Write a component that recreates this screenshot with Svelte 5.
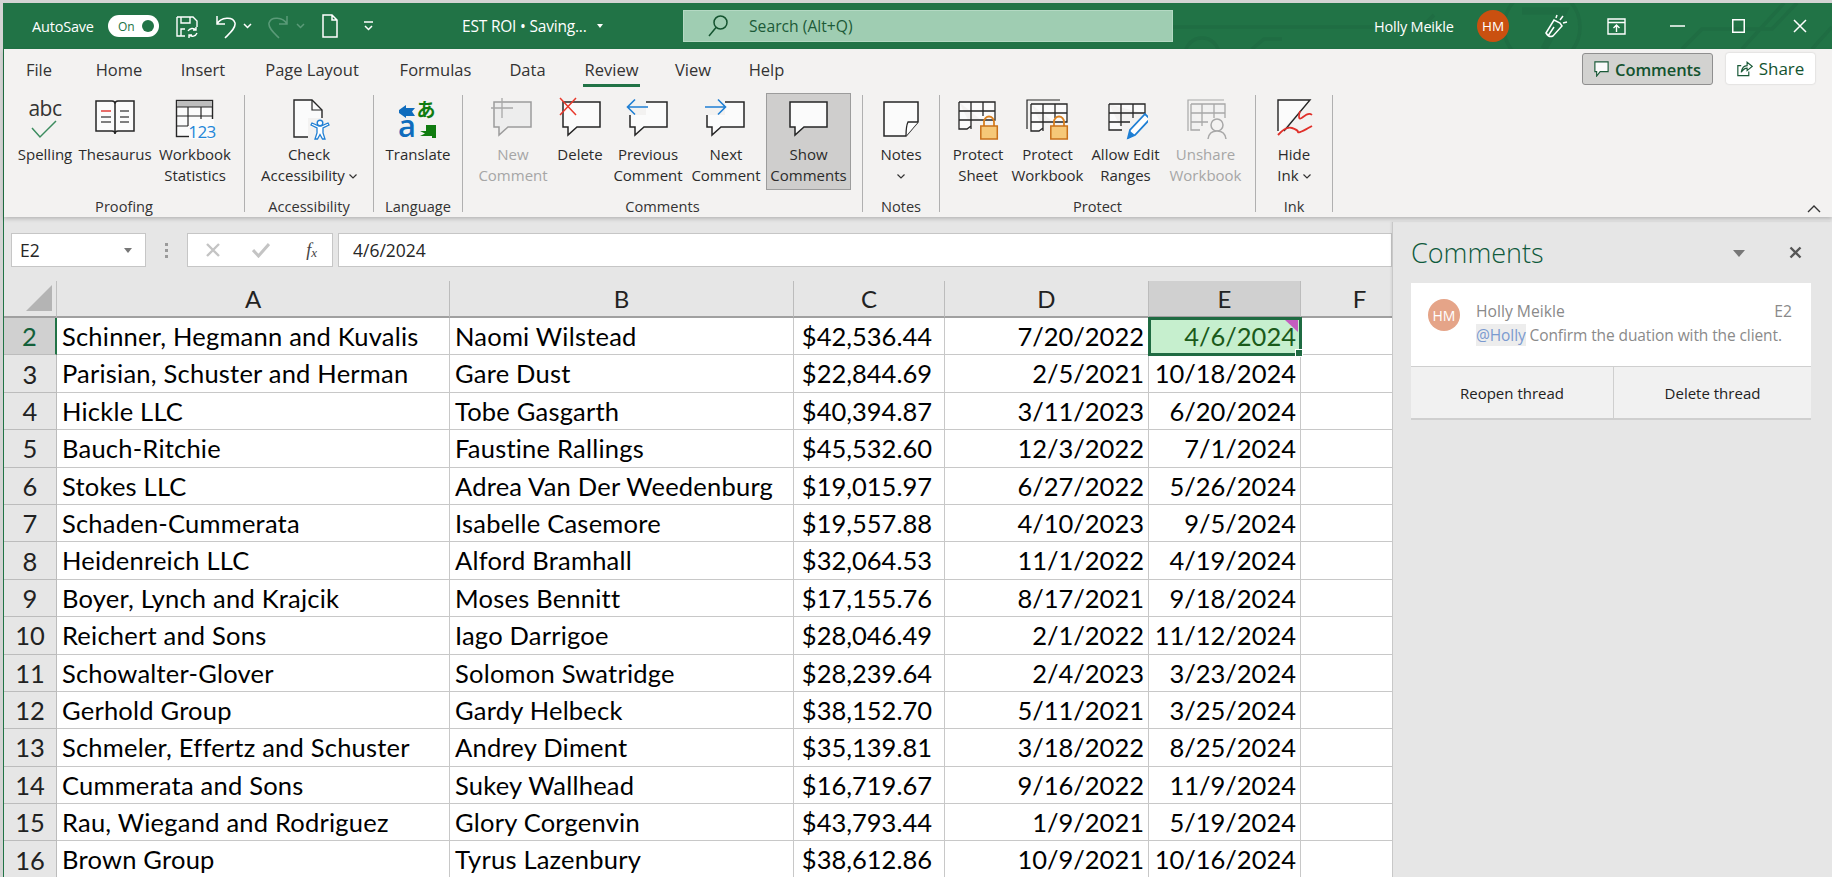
<script>
  const tabs = [
    ['File', 70], ['Home', 90], ['Insert', 78], ['Page Layout', 140], ['Formulas', 107],
    ['Data', 77], ['Review', 91], ['View', 72], ['Help', 75]
  ];
  const groups = [
    { label: 'Proofing', w: 241, pad: 6, items: [
      { id: 'spell', l: ['Spelling'], w: 70 }, { id: 'thes', l: ['Thesaurus'], w: 70 }, { id: 'stats', l: ['Workbook', 'Statistics'], w: 90 }
    ]},
    { label: 'Accessibility', w: 129, pad: 0, center: true, items: [{ id: 'access', l: ['Check', 'Accessibility'], w: 110, chev: 1 }] },
    { label: 'Language', w: 89, pad: 0, center: true, items: [{ id: 'trans', l: ['Translate'], w: 80 }] },
    { label: 'Comments', w: 400, pad: 18, items: [
      { id: 'new', l: ['New', 'Comment'], w: 64, off: true },
      { id: 'del', l: ['Delete'], w: 58, ml: 6 },
      { id: 'prev', l: ['Previous', 'Comment'], w: 74, ml: 2 },
      { id: 'next', l: ['Next', 'Comment'], w: 74, ml: 4 },
      { id: 'show', l: ['Show', 'Comments'], w: 85, ml: 3, on: true }
    ]},
    { label: 'Notes', w: 77, pad: 0, center: true, items: [{ id: 'notes', l: ['Notes'], w: 70, chevLine: 1 }] },
    { label: 'Protect', w: 316, pad: 5, items: [
      { id: 'psheet', l: ['Protect', 'Sheet'], w: 66 },
      { id: 'pbook', l: ['Protect', 'Workbook'], w: 73 },
      { id: 'allow', l: ['Allow Edit', 'Ranges'], w: 83 },
      { id: 'unshare', l: ['Unshare', 'Workbook'], w: 77, off: true }
    ]},
    { label: 'Ink', w: 77, pad: 0, center: true, items: [{ id: 'ink', l: ['Hide', 'Ink'], w: 60, chev: 1 }] }
  ];
  const rows = [
    ['Schinner, Hegmann and Kuvalis', 'Naomi Wilstead', '$42,536.44', '7/20/2022', '4/6/2024'],
    ['Parisian, Schuster and Herman', 'Gare Dust', '$22,844.69', '2/5/2021', '10/18/2024'],
    ['Hickle LLC', 'Tobe Gasgarth', '$40,394.87', '3/11/2023', '6/20/2024'],
    ['Bauch-Ritchie', 'Faustine Rallings', '$45,532.60', '12/3/2022', '7/1/2024'],
    ['Stokes LLC', 'Adrea Van Der Weedenburg', '$19,015.97', '6/27/2022', '5/26/2024'],
    ['Schaden-Cummerata', 'Isabelle Casemore', '$19,557.88', '4/10/2023', '9/5/2024'],
    ['Heidenreich LLC', 'Alford Bramhall', '$32,064.53', '11/1/2022', '4/19/2024'],
    ['Boyer, Lynch and Krajcik', 'Moses Bennitt', '$17,155.76', '8/17/2021', '9/18/2024'],
    ['Reichert and Sons', 'Iago Darrigoe', '$28,046.49', '2/1/2022', '11/12/2024'],
    ['Schowalter-Glover', 'Solomon Swatridge', '$28,239.64', '2/4/2023', '3/23/2024'],
    ['Gerhold Group', 'Gardy Helbeck', '$38,152.70', '5/11/2021', '3/25/2024'],
    ['Schmeler, Effertz and Schuster', 'Andrey Diment', '$35,139.81', '3/18/2022', '8/25/2024'],
    ['Cummerata and Sons', 'Sukey Wallhead', '$16,719.67', '9/16/2022', '11/9/2024'],
    ['Rau, Wiegand and Rodriguez', 'Glory Corgenvin', '$43,793.44', '1/9/2021', '5/19/2024'],
    ['Brown Group', 'Tyrus Lazenbury', '$38,612.86', '10/9/2021', '10/16/2024']
  ];
  const cols = ['A', 'B', 'C', 'D', 'E', 'F'];
</script>

{#snippet bubble(x, y, stroke = '#262626', fill = '#fbfbfb')}
  <path d="M{x} {y}H{x + 37}V{y + 25}H{x + 14}L{x + 5} {y + 33}V{y + 25}H{x}Z" fill={fill} stroke={stroke} stroke-width="1.5" />
{/snippet}

{#snippet sheetGrid(x, y, stroke = '#262626', fill = '#fbfbfb')}
  <path d="M{x} {y}H{x + 36}V{y + 18}H{x + 22}M{x + 12} {y}V{y + 27}M{x + 24} {y}V{y + 14}M{x} {y + 9}H{x + 36}M{x} {y + 18}H{x + 22}M{x} {y}V{y + 27}H{x + 8}l4-3" fill={fill} stroke={stroke} stroke-width="1.3" />
{/snippet}

{#snippet lock(x, y)}
  <path d="M{x + 4} {y + 10}V{y + 6}a5 5.5 0 0 1 10 0V{y + 10}" fill="none" stroke="#d9801f" stroke-width="1.8" />
  <rect x={x + 0.8} y={y + 10} width="16.5" height="13" fill="#f6c878" stroke="#c8701a" stroke-width="1.5" />
{/snippet}

{#snippet icon(id)}
  <svg class="ic" width="44" height="64" viewBox="0 -10 44 64" aria-hidden="true">
    {#if id === 'spell'}
      <text x="22" y="18" text-anchor="middle" class="abc">abc</text>
      <path d="M9 30L17 39 33 23" fill="none" stroke="#3c8c5f" stroke-width="1.5" />
    {:else if id === 'thes'}
      <path d="M3 3H19Q22 3 22 6V36Q22 33 19 33H3Z M41 3H25Q22 3 22 6V36Q22 33 25 33H41Z" fill="#fbfbfb" stroke="#262626" stroke-width="1.5" />
      <path d="M8 13H18" stroke="#e0302a" stroke-width="1.4" />
      <path d="M8 19H18M8 24H18M27 13H36M27 19H36M27 24H36" stroke="#555" stroke-width="1.3" />
    {:else if id === 'stats'}
      <rect x="3.5" y="2.5" width="36" height="36" fill="#fbfbfb" stroke="#262626" stroke-width="1.4" />
      <rect x="4" y="3" width="35" height="6" fill="#bdbdbd" />
      <path d="M4 9H39M4 18H39M15 9V28M28 9V28M4 28H15" stroke="#262626" stroke-width="1.2" fill="none" />
      <rect x="16" y="21" width="25" height="20" fill="#fbfbfb" />
      <text x="29" y="39.5" text-anchor="middle" class="n123">123</text>
    {:else if id === 'access'}
      <path d="M7 2H25L35 12V39H7Z" fill="#fbfbfb" stroke="#262626" stroke-width="1.4" />
      <path d="M25 2V12H35" fill="none" stroke="#262626" stroke-width="1.2" />
      <rect x="21" y="20" width="22" height="22" fill="#f3f2f1" />
      <circle cx="33" cy="25" r="2.8" fill="#fff" stroke="#1f7fd4" stroke-width="1.4" />
      <path d="M24 27l6 3V35L28 41H30.5L33 36.5 35.5 41H38L36 35V30l6-3-1-2-7 3H32l-7-3Z" fill="#fff" stroke="#1f7fd4" stroke-width="1.3" />
    {:else if id === 'trans'}
      <path d="M3 12L10 7V10H19L16 13.5 19 18H10V20L3 15Z" fill="#0f6cbd" />
      <text x="11" y="39" text-anchor="middle" class="tr-a">a</text>
      <text x="30" y="19" text-anchor="middle" class="tr-j">あ</text>
      <path d="M24 33L30 33V27H40V40H36V38H24L29 35.5Z" fill="#107c10" />
    {:else if id === 'new'}
      <g transform="translate(3,4)">{@render bubble(0, 0, '#9c9c9c', '#ededed')}</g>
      <path d="M0 10H22M11 0V20" stroke="#a8a8a8" stroke-width="1.3" />
    {:else if id === 'del'}
      <g transform="translate(5,4)">{@render bubble(0, 0)}</g>
      <path d="M2 0L18 17M18 0L2 17" stroke="#e8392c" stroke-width="1.5" />
    {:else if id === 'prev'}
      <g transform="translate(4,4)">{@render bubble(0, 0)}</g>
      <rect x="0" y="0" width="20" height="17" fill="#f3f2f1" />
      <path d="M22 9H2M9 1.5L1.5 9 9 16.5" fill="none" stroke="#1f7fd4" stroke-width="1.6" />
    {:else if id === 'next'}
      <g transform="translate(3,4)">{@render bubble(0, 0)}</g>
      <rect x="1" y="0" width="20" height="17" fill="#f3f2f1" />
      <path d="M1 9H21M14 1.5L21.5 9 14 16.5" fill="none" stroke="#1f7fd4" stroke-width="1.6" />
    {:else if id === 'show'}
      <g transform="translate(3,4)">{@render bubble(0, 0)}</g>
    {:else if id === 'notes'}
      <path d="M5 4H39V24L27 38H5Z" fill="#fbfbfb" stroke="#262626" stroke-width="1.5" />
      <path d="M39 24H29Q27 28 27 38" fill="#fff" stroke="#262626" stroke-width="1.3" />
    {:else if id === 'psheet'}
      {@render sheetGrid(3, 4)}
      {@render lock(24, 18)}
    {:else if id === 'pbook'}
      <path d="M1 31V2H34" fill="none" stroke="#262626" stroke-width="1.2" />
      {@render sheetGrid(5, 6)}
      {@render lock(24, 18)}
    {:else if id === 'allow'}
      <path d="M5 6H41V16M17 6V28M29 6V20M5 15H41M5 24H26M5 6V32H18" fill="#fbfbfb" stroke="#262626" stroke-width="1.3" />
      <path d="M24 40L26 32 41 16 46 21 31 37Z" fill="#fff" stroke="#1f7fd4" stroke-width="1.8" />
      <path d="M24 41L26 33 31 37Z" fill="#1f7fd4" />
    {:else if id === 'unshare'}
      <path d="M4 33V2H40" fill="none" stroke="#a8a8a8" stroke-width="1.2" />
      <path d="M7 6H41V20M18 6V28M30 6V20M7 15H41M7 24H24M7 6V32H16" fill="#f1f1f1" stroke="#a8a8a8" stroke-width="1.3" />
      <circle cx="33" cy="27" r="6" fill="#f3f2f1" stroke="#a8a8a8" stroke-width="1.5" />
      <path d="M24 41Q25 33 33 33T42 41" fill="#f3f2f1" stroke="#a8a8a8" stroke-width="1.5" />
    {:else if id === 'ink'}
      <path d="M6 2H38L6 36Z" fill="#fbfbfb" />
      <path d="M6 33V2H38L12 33" fill="none" stroke="#262626" stroke-width="1.4" />
      <path d="M28 13Q25 24 31 19T40 17" fill="none" stroke="#e0302a" stroke-width="1.7" />
      <path d="M6 37Q14 28 20 30T26 34T40 28" fill="none" stroke="#e0302a" stroke-width="1.9" />
    {/if}
  </svg>
{/snippet}

<div class="screen">
  <div class="win">
    <header class="title">
      <svg class="circuit" width="660" height="46" viewBox="0 0 660 46" aria-hidden="true">
        <g fill="none" stroke="#1f6d43" stroke-width="3.5">
          <path d="M0 24H250L262 12" />
          <circle cx="30" cy="52" r="17" />
          <path d="M80 46L92 36H110" />
          <circle cx="370" cy="24" r="38" />
          <path d="M350 8H392L372 46" stroke-width="7" />
          <path d="M510 46L530 26H600L625 0M570 46L612 0M640 46L660 24" />
        </g>
      </svg>
      <span class="autosave">AutoSave</span>
      <span class="toggle"><b>On</b><i></i></span>
      <svg class="q-save" width="22" height="26" viewBox="0 0 22 26" fill="none" stroke="#fff" stroke-width="1.4"><path d="M1 4H17L21 8V14M1 4V23H9M5 4V10H14V4M5 23V16H9" /><path d="M12 18a5 5 0 0 1 8-1M21 20a5 5 0 0 1-8 2M20 14V17H17M13 25V22H16" /></svg>
      <svg class="q-undo" width="20" height="26" viewBox="0 0 20 26" fill="none" stroke="#fff" stroke-width="1.5"><path d="M1 3V11H9M1 11C5 4 17 3 19 10 20 15 14 20 9 25" /></svg>
      <svg class="q-ch1" width="9" height="6" viewBox="0 0 9 6" fill="none" stroke="#fff" stroke-width="1.5"><path d="M1 1L4.5 4.5 8 1" /></svg>
      <svg class="q-redo" width="20" height="26" viewBox="0 0 20 26" fill="none" stroke="#5a9a78" stroke-width="1.5"><path d="M19 3V11H11M19 11C15 4 3 3 1 10 0 15 6 20 11 25" /></svg>
      <svg class="q-ch2" width="9" height="6" viewBox="0 0 9 6" fill="none" stroke="#5a9a78" stroke-width="1.5"><path d="M1 1L4.5 4.5 8 1" /></svg>
      <svg class="q-doc" width="16" height="24" viewBox="0 0 16 24" fill="none" stroke="#fff" stroke-width="1.5"><path d="M1 1H10L15 6V23H1ZM10 1V6H15" /></svg>
      <svg class="q-more" width="9" height="10" viewBox="0 0 9 10" fill="none" stroke="#fff" stroke-width="1.5"><path d="M0 1H9M1 5L4.5 8.5 8 5" /></svg>
      <span class="doc">EST ROI • Saving...</span>
      <span class="doc-arrow"></span>
      <div class="search">
        <svg width="20" height="22" viewBox="0 0 20 22" fill="none" stroke="#14532f" stroke-width="1.5"><circle cx="12.5" cy="7.5" r="6.5" /><path d="M8 12.5L1 21" /></svg>
        <span>Search (Alt+Q)</span>
      </div>
      <span class="user">Holly Meikle</span>
      <span class="avatar">HM</span>
      <svg class="t-ink" width="23" height="24" viewBox="0 0 23 24" fill="none" stroke="#fff" stroke-width="1.5"><path d="M1 19L9 6 15 9 17 12 8 22Q4 24 1 19ZM3 22L9 13M12 1L11 4M18 2L15 6M22 8L18 9" /></svg>
      <svg class="t-disp" width="19" height="17" viewBox="0 0 19 17" fill="none" stroke="#fff" stroke-width="1.4"><path d="M1 1H18V16H1ZM1 4.5H18M9.5 14V7.5M6.5 10L9.5 7 12.5 10" /></svg>
      <svg class="t-min" width="15" height="2" viewBox="0 0 15 2"><path d="M0 1H15" stroke="#fff" stroke-width="1.5" /></svg>
      <svg class="t-max" width="13" height="14" viewBox="0 0 13 14"><rect x=".75" y=".75" width="11.5" height="12.5" fill="none" stroke="#fff" stroke-width="1.5" /></svg>
      <svg class="t-close" width="14" height="14" viewBox="0 0 14 14"><path d="M1 1L13 13M13 1L1 13" fill="none" stroke="#fff" stroke-width="1.5" /></svg>
    </header>

    <section class="ribbon">
      <div class="tabs">
        {#each tabs as [t, w]}
          <div class="tab" class:active={t === 'Review'} style="width:{w}px">{t}</div>
        {/each}
        <div class="tab-actions">
          <div class="btn-comments">
            <svg width="15" height="16" viewBox="0 0 17 18" fill="#fafafa" stroke="#1a5a38" stroke-width="1.3"><path d="M1 1H16V12H7L3 17V12H1Z" /></svg>
            Comments
          </div>
          <div class="btn-share">
            <svg width="16" height="17" viewBox="0 0 19 19" fill="none" stroke="#1a5a38" stroke-width="1.4"><path d="M5 6H1V18H14V13M5 14C6 8 9 6 12 6V2L18 7 12 12V9C9 9 7 11 5 14Z" /></svg>
            Share
          </div>
        </div>
      </div>
      <div class="groups">
        {#each groups as g}
          <div class="group" style="width:{g.w}px">
            <div class="items" class:center={g.center} style="padding-left:{g.pad}px">
              {#each g.items as it}
                <div class="rbtn" class:off={it.off} class:on={it.on} style="width:{it.w}px;margin-left:{it.ml || 0}px">
                  {@render icon(it.id)}
                  <div class="lbl">
                    {#each it.l as line, i}
                      <span>{line}{#if it.chev && i === it.l.length - 1}<svg class="mini" width="8" height="5" viewBox="0 0 8 5"><path d="M.5.5L4 4 7.5.5" fill="none" stroke="#333" stroke-width="1.2" /></svg>{/if}</span>
                    {/each}
                    {#if it.chevLine}<span><svg class="mini solo" width="8" height="5" viewBox="0 0 8 5"><path d="M.5.5L4 4 7.5.5" fill="none" stroke="#333" stroke-width="1.2" /></svg></span>{/if}
                  </div>
                </div>
              {/each}
            </div>
            <div class="glabel">{g.label}</div>
          </div>
        {/each}
      </div>
      <svg class="collapse" width="14" height="8" viewBox="0 0 14 8"><path d="M1 7L7 1 13 7" fill="none" stroke="#333" stroke-width="1.4" /></svg>
    </section>

    <div class="work">
      <div class="sheet">
        <div class="fbar">
          <div class="namebox"><span>E2</span><i></i></div>
          <div class="dots"><b></b><b></b><b></b></div>
          <div class="fbtns">
            <svg width="16" height="16" viewBox="0 0 16 16"><path d="M2 2L14 14M14 2L2 14" stroke="#c4c4c4" stroke-width="2.4" /></svg>
            <svg class="fcheck" width="18" height="16" viewBox="0 0 18 16"><path d="M1 8L6.5 14 17 2" fill="none" stroke="#c4c4c4" stroke-width="3" /></svg>
            <span class="fx">f<sub>x</sub></span>
          </div>
          <div class="finput">4/6/2024</div>
        </div>
        <div class="gridwrap">
          <div class="grid">
            <div class="corner"><span></span></div>
            {#each cols as c}
              <div class="ch" class:sel={c === 'E'}>{c}</div>
            {/each}
            {#each rows as r, i}
              <div class="rh" class:sel={i === 0}>{i + 2}</div>
              <div class="cell txt">{r[0]}</div>
              <div class="cell txt">{r[1]}</div>
              <div class="cell money">{r[2]}</div>
              <div class="cell date">{r[3]}</div>
              <div class="cell date" class:active={i === 0}>{r[4]}</div>
              <div class="cell"></div>
            {/each}
          </div>
        </div>
      </div>

      <aside class="panel">
        <div class="phead">
          <span>Comments</span>
          <i class="pdrop"></i>
          <svg width="13" height="13" viewBox="0 0 13 13"><path d="M1.5 1.5L11.5 11.5M11.5 1.5L1.5 11.5" stroke="#555" stroke-width="2.4" /></svg>
        </div>
        <div class="card">
          <div class="cbody">
            <div class="cav">HM</div>
            <div class="ctext">
              <div class="cname"><span>Holly Meikle</span><span>E2</span></div>
              <div class="cmsg"><mark>@Holly</mark> Confirm the duation with the client.</div>
            </div>
          </div>
          <div class="cacts">
            <div>Reopen thread</div>
            <div>Delete thread</div>
          </div>
        </div>
      </aside>
    </div>
  </div>
</div>

<style>
  :global(body) { margin: 0; background: #d8d8d8; overflow: hidden; }
  .screen { width: 1832px; height: 877px; overflow: hidden; padding: 3px 0 0 3px; box-sizing: border-box; background: #d4d4d4; font-family: "Open Sans", "Noto Sans", sans-serif; color: #262626; }
  .win { width: 1829px; height: 874px; border-left: 1px solid #217346; box-sizing: border-box; background: #e6e6e6; display: flex; flex-direction: column; }

  .title { position: relative; height: 46px; flex: none; background: #217346; display: flex; align-items: center; color: #fff; font-size: 14.5px; overflow: hidden; }
  .title > * { flex: none; position: relative; }
  .title > .circuit { position: absolute; left: 1168px; top: 0; }
  .autosave { margin-left: 28px; width: 68px; white-space: nowrap; letter-spacing: -.2px; }
  .toggle { margin-left: 8px; width: 51px; height: 22px; border-radius: 11px; background: #fff; color: #217346; display: flex; align-items: center; justify-content: space-between; padding: 0 5px 0 10px; box-sizing: border-box; font-size: 12px; }
  .toggle b { font-weight: 400; }
  .toggle i { width: 12px; height: 12px; border-radius: 50%; background: #217346; }
  .q-save { margin-left: 17px; }
  .q-undo { margin-left: 18px; }
  .q-ch1 { margin-left: 7px; }
  .q-redo { margin-left: 16px; }
  .q-ch2 { margin-left: 8px; }
  .q-doc { margin-left: 17px; }
  .q-more { margin-left: 26px; }
  .doc { margin-left: 89px; width: 125px; white-space: nowrap; font-size: 15.5px; letter-spacing: -.2px; }
  .doc-arrow { margin-left: 10px; border: 3.5px solid transparent; border-top: 4px solid #fff; border-bottom: 0; width: 0; height: 0; }
  .search { margin-left: 80px; width: 490px; height: 32px; background: #9fcdb2; border: 1px solid #b4d9c3; box-sizing: border-box; display: flex; align-items: center; padding-left: 24px; color: #1c5a38; gap: 21px; font-size: 15.7px; }
  .user { margin-left: 201px; width: 89px; white-space: nowrap; letter-spacing: -.2px; }
  .avatar { margin-left: 14px; width: 32px; height: 32px; border-radius: 50%; background: #ca5010; display: flex; align-items: center; justify-content: center; font-size: 13.5px; }
  .t-ink { margin-left: 36px; }
  .t-disp { margin-left: 39px; }
  .t-min { margin-left: 44px; }
  .t-max { margin-left: 47px; }
  .t-close { margin-left: 48px; }

  .ribbon { position: relative; z-index: 2; height: 168px; flex: none; background: #f3f2f1; box-shadow: 0 2px 4px rgba(0, 0, 0, .2); }
  .tabs { display: flex; height: 44px; font-size: 16.5px; }
  .tab { position: relative; line-height: 42px; text-align: center; flex: none; color: #333; }
  .tab.active::after { content: ""; position: absolute; left: 17px; right: 17px; bottom: 6px; height: 3px; background: #217346; }
  .tab-actions { margin-left: auto; padding: 4px 17px 0 0; display: flex; gap: 13px; align-items: flex-start; }
  .btn-comments, .btn-share { display: flex; align-items: center; justify-content: center; gap: 6px; height: 31px; border-radius: 3px; color: #14532f; box-sizing: border-box; }
  .btn-comments { width: 131px; height: 32px; background: #d2d2d0; border: 1px solid #8f8f8f; font-weight: 600; font-size: 16.5px; letter-spacing: -.1px; }
  .btn-share { width: 89px; background: #fff; box-shadow: 0 0 2px rgba(0, 0, 0, .2); font-size: 17px; }

  .groups { display: flex; height: 119px; }
  .group { flex: none; box-sizing: border-box; border-right: 1px solid #b0b0b0; margin-top: 2px; height: 117px; display: flex; flex-direction: column; position: relative; }
  .items { flex: 1; display: flex; margin-top: -2px; }
  .items.center { justify-content: center; padding-left: 0 !important; }
  .group .glabel { text-align: center; font-size: 14.6px; line-height: 20px; height: 16px; color: #333; }
  .rbtn { flex: none; height: 97px; display: flex; flex-direction: column; align-items: center; box-sizing: border-box; font-size: 15px; line-height: 21px; color: #2b2b2b; padding-top: 5px; }
  .rbtn .ic { flex: none; margin: -10px 0; }
  .rbtn.off { color: #a6a6a6; }
  .rbtn.on { background: #cfcecd; border: 1px solid #9c9c9c; padding-top: 4px; }
  .lbl { display: flex; flex-direction: column; align-items: center; white-space: nowrap; margin-top: 2px; }
  .mini { margin-left: 4px; vertical-align: 2px; }
  .mini.solo { margin-left: 0; }
  .collapse { position: absolute; left: 1803px; top: 156px; }
  .abc { font: 400 21px "Open Sans", sans-serif; fill: #333; letter-spacing: -.5px; }
  .n123 { font: 400 17px "Open Sans", sans-serif; fill: #2386d8; letter-spacing: -.5px; }
  .tr-a { font: 600 31px "Open Sans", sans-serif; fill: #0f6cbd; }
  .tr-j { font: 700 19px "Noto Sans CJK JP", sans-serif; fill: #107c10; }

  .work { flex: 1; display: flex; min-height: 0; }
  .sheet { width: 1388px; flex: none; overflow: hidden; padding-top: 16px; box-sizing: border-box; display: flex; flex-direction: column; }
  .fbar { display: flex; height: 34px; margin-left: 7px; flex: none; font-size: 17.5px; }
  .namebox, .fbtns, .finput { background: #fff; border: 1px solid #c6c6c6; box-sizing: border-box; }
  .namebox { width: 135px; display: flex; align-items: center; justify-content: space-between; padding: 0 13px 0 8px; }
  .namebox i { border: 4.5px solid transparent; border-top: 5px solid #777; border-bottom: 0; }
  .dots { width: 41px; display: flex; flex-direction: column; align-items: center; justify-content: center; gap: 3px; }
  .dots b { width: 3px; height: 3px; background: #9a9a9a; }
  .fbtns { width: 146px; display: flex; align-items: center; justify-content: space-between; padding: 0 15px 0 17px; }
  .fcheck { margin-left: -6px; }
  .fx { font: italic 18px "Liberation Serif", serif; color: #444; }
  .fx sub { font-size: 13px; vertical-align: -1px; }
  .finput { margin-left: 5px; flex: 1; padding-left: 14px; line-height: 32px; }

  .gridwrap { margin-top: 14px; flex: 1; overflow: hidden; }
  .grid { display: grid; width: 1415px; grid-template-columns: 53px 393px 344px 151px 204px 152px 118px; grid-template-rows: 37px; grid-auto-rows: 37.4px; font-family: Lato, sans-serif; font-size: 25.5px; color: #000; }
  .corner, .ch, .rh { background: #e6e6e6; box-sizing: border-box; }
  .corner { position: relative; border-bottom: 2px solid #a0a0a0; border-right: 1px solid #c0c0c0; }
  .corner span { position: absolute; right: 4px; bottom: 5px; border-style: solid; border-width: 0 0 26px 26px; border-color: transparent transparent #b4b4b4 transparent; }
  .ch { border-right: 1px solid #bcbcbc; border-bottom: 2px solid #a0a0a0; display: flex; align-items: center; justify-content: center; color: #222; font-size: 24px; }
  .ch.sel { background: #d0d0d0; }
  .rh { border-bottom: 1px solid #bcbcbc; border-right: 1px solid #bcbcbc; display: flex; align-items: center; justify-content: center; color: #222; }
  .rh.sel { background: #d0d0d0; color: #14603a; border-right: 2px solid #217346; }
  .cell { background: #fff; border-right: 1px solid #c8c8c8; border-bottom: 1px solid #c8c8c8; box-sizing: border-box; padding: 0 5px; line-height: 36px; white-space: nowrap; overflow: hidden; position: relative; }
  .txt { letter-spacing: .22px; padding-left: 5px; }
  .money { text-align: right; padding-right: 12px; }
  .date { text-align: right; padding-right: 4px; }
  .cell.active { background: #c6efce; color: #1a5a1a; overflow: visible; outline: 3px solid #1f6b42; outline-offset: -2px; z-index: 2; }
  .cell.active::before { content: ""; position: absolute; right: 2px; top: 2px; border-style: solid; border-width: 0 13px 12px 0; border-color: transparent #c45cc0 transparent transparent; }
  .cell.active::after { content: ""; position: absolute; right: -3px; bottom: -3px; width: 6px; height: 6px; background: #1f6b42; border: 1px solid #fff; }

  .panel { flex: 1; margin-top: 5px; background: #e6e6e6; border-left: 1px solid #c8c8c8; box-shadow: -1px 0 2px rgba(0, 0, 0, .08); padding: 0 30px 0 18px; box-sizing: border-box; min-width: 0; }
  .phead { height: 61px; display: flex; align-items: center; font-size: 27px; font-weight: 300; color: #0f5a3c; }
  .phead span { flex: 1; }
  .pdrop { border: 6px solid transparent; border-top: 7px solid #777; border-bottom: 0; margin-right: 44px; margin-top: 2px; }
  .card { width: 400px; font-size: 15px; }
  .cbody { background: #fff; height: 83px; display: flex; padding: 16px 19px 0 17px; box-sizing: border-box; }
  .cav { width: 32px; height: 32px; border-radius: 50%; background: #e5a488; color: #fff; display: flex; align-items: center; justify-content: center; font-size: 14px; flex: none; }
  .ctext { margin-left: 16px; flex: 1; min-width: 0; line-height: 24px; }
  .cname { display: flex; justify-content: space-between; color: #8a8a8a; font-size: 15.7px; }
  .cmsg { color: #8a8a8a; white-space: nowrap; font-size: 15.5px; letter-spacing: -.1px; }
  .cmsg mark { background: #ededed; color: #7a9ad0; }
  .cacts { display: flex; height: 54px; background: #f1f1f1; border-top: 1px solid #cfcfcf; border-bottom: 2px solid #cfcfcf; box-sizing: border-box; color: #222; }
  .cacts div { flex: 1; display: flex; align-items: center; justify-content: center; }
  .cacts div:first-child { flex: none; width: 203px; box-sizing: border-box; border-right: 1px solid #cfcfcf; }
</style>
